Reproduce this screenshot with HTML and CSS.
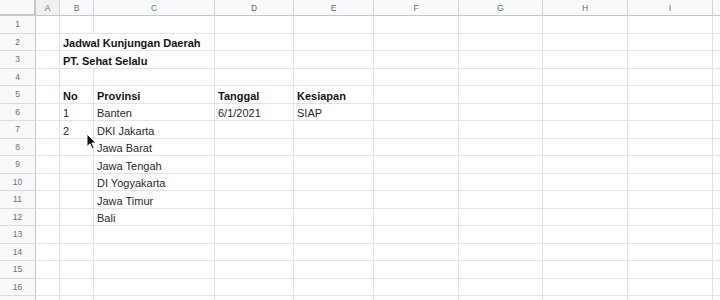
FILE: index.html
```html
<!DOCTYPE html>
<html>
<head>
<meta charset="utf-8">
<link rel="stylesheet" href="styles.css">
</head>
<body>
<div class="sheet">
  <div class="corner"></div><div class="ch sel">A</div><div class="ch">B</div><div class="ch">C</div><div class="ch">D</div><div class="ch">E</div><div class="ch">F</div><div class="ch">G</div><div class="ch">H</div><div class="ch">I</div><div class="ch"></div>

  <div class="rh">1</div><div class="c"></div><div class="c"></div><div class="c"></div><div class="c"></div><div class="c"></div><div class="c"></div><div class="c"></div><div class="c"></div><div class="c"></div><div class="c"></div>

  <div class="rh">2</div><div class="c"></div><div class="c b ov">Jadwal Kunjungan Daerah</div><div class="c"></div><div class="c"></div><div class="c"></div><div class="c"></div><div class="c"></div><div class="c"></div><div class="c"></div><div class="c"></div>

  <div class="rh">3</div><div class="c"></div><div class="c b ov">PT. Sehat Selalu</div><div class="c"></div><div class="c"></div><div class="c"></div><div class="c"></div><div class="c"></div><div class="c"></div><div class="c"></div><div class="c"></div>

  <div class="rh">4</div><div class="c"></div><div class="c"></div><div class="c"></div><div class="c"></div><div class="c"></div><div class="c"></div><div class="c"></div><div class="c"></div><div class="c"></div><div class="c"></div>

  <div class="rh">5</div><div class="c"></div><div class="c b">No</div><div class="c b">Provinsi</div><div class="c b">Tanggal</div><div class="c b">Kesiapan</div><div class="c"></div><div class="c"></div><div class="c"></div><div class="c"></div><div class="c"></div>

  <div class="rh">6</div><div class="c"></div><div class="c">1</div><div class="c">Banten</div><div class="c">6/1/2021</div><div class="c">SIAP</div><div class="c"></div><div class="c"></div><div class="c"></div><div class="c"></div><div class="c"></div>

  <div class="rh">7</div><div class="c"></div><div class="c">2</div><div class="c">DKI Jakarta</div><div class="c"></div><div class="c"></div><div class="c"></div><div class="c"></div><div class="c"></div><div class="c"></div><div class="c"></div>

  <div class="rh">8</div><div class="c"></div><div class="c"></div><div class="c">Jawa Barat</div><div class="c"></div><div class="c"></div><div class="c"></div><div class="c"></div><div class="c"></div><div class="c"></div><div class="c"></div>

  <div class="rh">9</div><div class="c"></div><div class="c"></div><div class="c">Jawa Tengah</div><div class="c"></div><div class="c"></div><div class="c"></div><div class="c"></div><div class="c"></div><div class="c"></div><div class="c"></div>

  <div class="rh">10</div><div class="c"></div><div class="c"></div><div class="c">DI Yogyakarta</div><div class="c"></div><div class="c"></div><div class="c"></div><div class="c"></div><div class="c"></div><div class="c"></div><div class="c"></div>

  <div class="rh">11</div><div class="c"></div><div class="c"></div><div class="c">Jawa Timur</div><div class="c"></div><div class="c"></div><div class="c"></div><div class="c"></div><div class="c"></div><div class="c"></div><div class="c"></div>

  <div class="rh">12</div><div class="c"></div><div class="c"></div><div class="c">Bali</div><div class="c"></div><div class="c"></div><div class="c"></div><div class="c"></div><div class="c"></div><div class="c"></div><div class="c"></div>

  <div class="rh">13</div><div class="c"></div><div class="c"></div><div class="c"></div><div class="c"></div><div class="c"></div><div class="c"></div><div class="c"></div><div class="c"></div><div class="c"></div><div class="c"></div>

  <div class="rh">14</div><div class="c"></div><div class="c"></div><div class="c"></div><div class="c"></div><div class="c"></div><div class="c"></div><div class="c"></div><div class="c"></div><div class="c"></div><div class="c"></div>

  <div class="rh">15</div><div class="c"></div><div class="c"></div><div class="c"></div><div class="c"></div><div class="c"></div><div class="c"></div><div class="c"></div><div class="c"></div><div class="c"></div><div class="c"></div>

  <div class="rh">16</div><div class="c"></div><div class="c"></div><div class="c"></div><div class="c"></div><div class="c"></div><div class="c"></div><div class="c"></div><div class="c"></div><div class="c"></div><div class="c"></div>

  <div class="rh"></div><div class="c"></div><div class="c"></div><div class="c"></div><div class="c"></div><div class="c"></div><div class="c"></div><div class="c"></div><div class="c"></div><div class="c"></div><div class="c"></div>

  <svg class="cursor" width="12" height="17" viewBox="0 0 12 17">
    <path d="M1 1 L1 13.5 L4 10.8 L6.2 15.8 L8.2 14.9 L6 10 L10 10 Z" fill="#111" stroke="#fff" stroke-width="1" stroke-linejoin="round"/>
  </svg>
</div>
</body>
</html>
```

FILE: styles.css
```css
* { box-sizing: border-box; }
html, body { margin: 0; padding: 0; background: #fff; overflow: hidden; }
body { width: 720px; height: 300px; }

.sheet {
  position: relative;
  display: grid;
  grid-template-columns: 36px 24px 34px 121px 79px 80px 85px 84px 85px 85px 30px;
  grid-template-rows: 16px repeat(17, 17.5px);
  font-family: "Liberation Sans", Arial, sans-serif;
}

.corner {
  background: #f8f9fa;
  border-right: 2px solid #c4c7c5;
  border-bottom: 2px solid #c4c7c5;
}

.ch {
  background: #f8f9fa;
  border-right: 1px solid #d4d4d4;
  border-bottom: 1px solid #c4c7c5;
  color: #6f6f6f;
  font-size: 8.5px;
  display: flex;
  align-items: center;
  justify-content: center;
  padding-top: 1px;
}
.ch.sel { background: #eef0f2; }

.rh {
  background: #f8f9fa;
  border-right: 1px solid #c4c7c5;
  border-bottom: 1px solid #dcdcdc;
  color: #6f6f6f;
  font-size: 8.5px;
  display: flex;
  align-items: center;
  justify-content: center;
}

.c {
  border-right: 1px solid #e4e4e4;
  border-bottom: 1px solid #e4e4e4;
  font-size: 11px;
  line-height: 13px;
  color: #2a2a2a;
  padding: 0 3px 0 3px;
  display: flex;
  align-items: flex-end;
  white-space: nowrap;
}
.b { font-weight: bold; color: #151515; }
.ov { overflow: visible; border-right-color: transparent; }

.cursor {
  position: absolute;
  left: 86px;
  top: 133px;
}
```
